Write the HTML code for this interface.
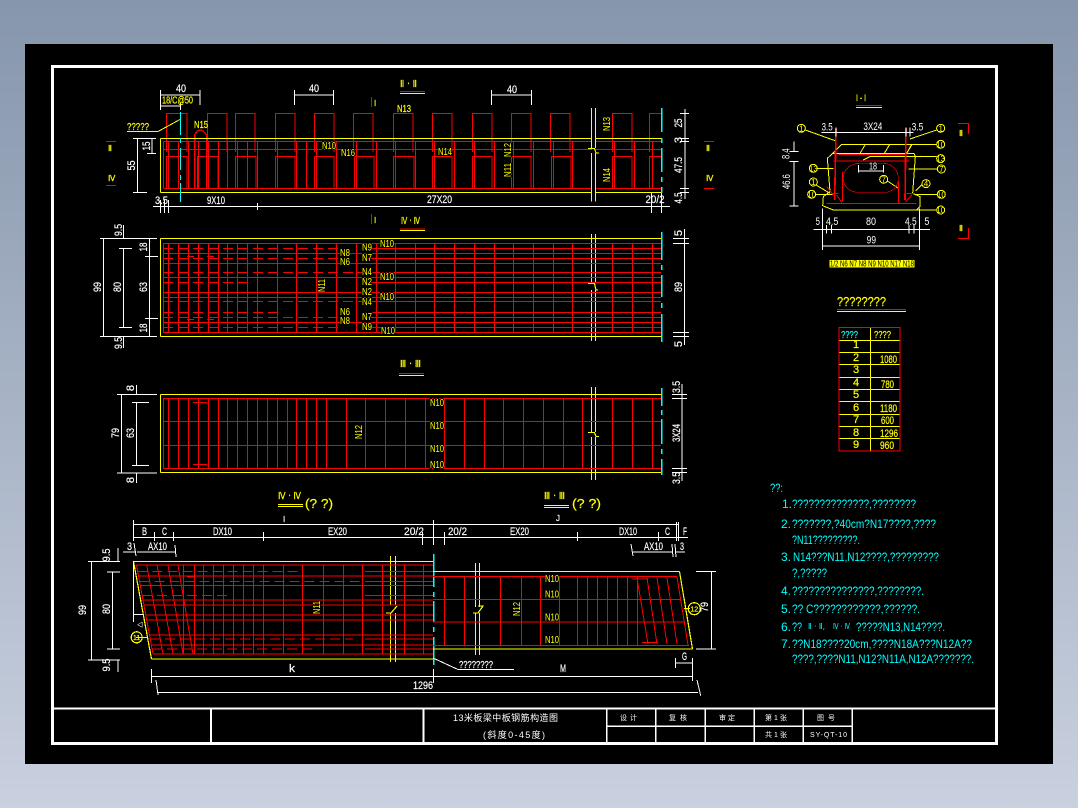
<!DOCTYPE html>
<html><head><meta charset="utf-8"><title>CAD</title>
<style>
html,body{margin:0;padding:0;width:1078px;height:808px;overflow:hidden;background:linear-gradient(180deg,#8696ac 0%,#c9d0df 100%)}
svg{position:absolute;left:0;top:0;display:block}
path,circle,rect{shape-rendering:crispEdges}
text{font-family:"Liberation Sans","Noto Sans CJK SC",sans-serif;font-size:11px}
.w{fill:#fff;stroke:#fff;stroke-width:.2px}.y{fill:#ff0;stroke:#ff0;stroke-width:.2px}.c{fill:#0ff;stroke:#0ff;stroke-width:.2px}
.n{fill:#ff0;font-size:10px;stroke:#000;stroke-width:2px;paint-order:stroke}
.cn{font-size:9px;fill:#fff}
.note{fill:#0ff;font-size:12px}
.ln{fill:none}
.s{fill:none}
</style></head><body>
<svg width="1078" height="808" viewBox="0 0 1078 808" xmlns="http://www.w3.org/2000/svg">
<rect x="25" y="44" width="1028" height="720" fill="#000"/>
<!-- frame -->
<g class="ln" stroke="#fff">
<rect x="52.5" y="66.5" width="944" height="677" stroke-width="3"/>
<path stroke-width="2" d="M53 708.5H996M211 708V743M423.5 708V743"/>
<path stroke-width="1.5" d="M606.5 708V743M655.5 708V743M705 708V743M754 708V743M803 708V743M852 708V743M606 726H852"/>
</g>

<!-- VIEW 1 -->
<g class="ln" stroke="#f00">
<path d="M163.5 141.5H661M163.5 149.5H661M163.5 188.5H661M163.5 141.5V188.5"/>
<path d="M166.5 152V113.5H187V152M207.5 152V113.5H227V152M235.5 152V113.5H255V152M275.5 152V113.5H295V152M314.5 152V113.5H334V152M353.5 152V113.5H373V152M393.5 152V113.5H413V152M432.5 152V113.5H452V152M472.5 152V113.5H492V152M511.5 152V113.5H531V152M550.5 152V113.5H570V152M612.5 152V113.5H632V152M649.5 152V113.5H661"/>
<path d="M166.5 188V156.5H187V188M197.5 188V156.5H218V188M235.5 188V156.5H256V188M275.5 188V156.5H295V188M314.5 188V156.5H334V188M354.5 188V156.5H374V188M393.5 188V156.5H414V188M432.5 188V156.5H452V188M472.5 188V156.5H492V188M511.5 188V156.5H531V188M551.5 188V156.5H571V188M612.5 188V156.5H632V188M649.5 188V156.5H661"/>
<path d="M168.5 141V188M178.5 141V188M188.5 141V188M198.5 141V188M208.5 141V188M218.5 141V188M227.5 141V188M237.5 141V188M247.5 141V188M257.5 141V188M277.5 141V188M296.5 141V188M306.5 141V188M316.5 141V188M336.5 141V188M356.5 141V188M376.5 141V188M395.5 141V188M415.5 141V188M434.5 141V188M454.5 141V188M474.5 141V188M494.5 141V188M513.5 141V188M533.5 141V188M553.5 141V188M572.5 141V188M614.5 141V188M634.5 141V188M652.5 141V188"/>
<path stroke-width="1.5" d="M194.5 188V135M206.5 188V135"/>
<path d="M371.5 97V107M371.5 214V224M106 141.5H116M106 185.5H116M704 141.5H714M704 188.5H714"/>
</g>
<path class="s" stroke="#f00" stroke-width="1.3" d="M194.5 135Q200 125 206.5 135"/>
<g class="ln" stroke="#ff0">
<path d="M160.5 138.5H661M160.5 192.5H661M160.5 138.5V192.5"/>
<path d="M127 131.5H158"/>
<path d="M400 93.5H425M400 230.5H425M399 375.5H424"/>
</g>
<path class="s" stroke="#ff0" d="M158 131.5L180 119.5"/>
<path class="ln" stroke="#f00" d="M400 91.5H425M400 229H425M399 373.5H424"/>
<g class="ln" stroke="#0ff" stroke-width="1">
<path d="M180.5 112V135M180.5 138V143M180.5 148V170M180.5 175V180M180.5 183V202"/>
<path stroke-width="1.5" d="M661.5 108V132M661.5 138V143M661.5 148V172M661.5 177V182M661.5 187V193"/>
<path stroke-width="1.5" d="M661.5 232V260M661.5 265V270M661.5 275V297M661.5 303V308M661.5 314V342"/>
<path stroke-width="1.5" d="M661.5 388V406M661.5 410V415M661.5 419V444M661.5 449V454M661.5 459V475"/>
<path stroke-width="1.5" d="M433.5 554V587M433.5 592V597M433.5 601V622M433.5 627V632M433.5 637V665"/>
</g>
<!-- breaks -->
<rect x="592" y="108" width="3" height="94" fill="#000"/>
<rect x="592" y="234" width="3" height="107" fill="#000"/>
<rect x="592" y="387" width="3" height="93" fill="#000"/>
<rect x="391" y="556" width="4" height="106" fill="#000"/>
<rect x="476" y="563" width="3" height="92" fill="#000"/>
<g class="ln" stroke="#ff0" stroke-width="1.2">
<path d="M591.5 108V148M595.5 108V148M591.5 153V201.5M595.5 153V201.5"/>
<path d="M591.5 234V283M595.5 234V283M591.5 290V341M595.5 290V341"/>
<path d="M591.5 387V432M595.5 387V432M591.5 437V480M595.5 437V480"/>
<path d="M390.5 556V605M395.5 556V605M390.5 613V662M395.5 613V662"/>
<path d="M475.5 563V607M479.5 563V607M475.5 613V655M479.5 613V655"/>
</g>
<g class="s" stroke="#ff0" stroke-width="1.2">
<path d="M588 148.5H594.5L596 153H599"/>
<path d="M588 283.5H594.5L596 290H598"/>
<path d="M588 432.5H594.5L596 436.5H599"/>
<path d="M386 613H391L397 606"/>
<path d="M473 613H478L483 606H478"/>
</g>
<g class="ln" stroke="#fff">
<path d="M160.5 90V105M200 90V105M160.5 95H200M294.5 90V105M333.5 90V105M294.5 95H333.5M491.5 90V105M531.5 90V105M491.5 95H531.5"/>
<path d="M160.5 100V110M180.5 103V110M160.5 106H181"/>
<path d="M133 138.5H147M133 192.5H147M137.5 138.5V192.5M147 138.5H156M147 153.5H156M152 138V154"/>
<path d="M153 206.5H670M160.5 200V213M164.5 200V213M168.5 200V213M257.5 203V210M651.5 193V213M661.5 193V213"/>
<path d="M680 113.5H689M680 138.5H689M680 141.5H689M680 188.5H689M680 192.5H689M685 109V199"/>
</g>
<text class="w" x="181" y="92" text-anchor="middle" textLength="10" lengthAdjust="spacingAndGlyphs">40</text>
<text class="w" x="314" y="92" text-anchor="middle" textLength="10" lengthAdjust="spacingAndGlyphs">40</text>
<text class="w" x="512" y="93" text-anchor="middle" textLength="10" lengthAdjust="spacingAndGlyphs">40</text>
<text class="y" x="162" y="103.5" textLength="31" lengthAdjust="spacingAndGlyphs" style="font-size:10px">18/C@50</text>
<text class="y" x="127" y="130" textLength="22" lengthAdjust="spacingAndGlyphs" style="font-size:10px">?????</text>
<text class="y" x="194" y="128" textLength="14" lengthAdjust="spacingAndGlyphs" style="font-size:10px">N15</text>
<text class="y" x="397" y="112" textLength="14" lengthAdjust="spacingAndGlyphs" style="font-size:10px">N13</text>
<text class="y" x="374" y="106" style="font-size:8px">I</text>
<text class="y" x="374" y="223" style="font-size:8px">I</text>
<text class="y" x="400" y="87" textLength="17" lengthAdjust="spacingAndGlyphs" style="font-size:10px;font-family:'DejaVu Sans',sans-serif">Ⅱ · Ⅱ</text>
<text class="y" x="108" y="151" style="font-size:8px;font-family:'DejaVu Sans',sans-serif">Ⅱ</text>
<text class="y" x="108" y="181" style="font-size:8px;font-family:'DejaVu Sans',sans-serif">Ⅳ</text>
<text class="y" x="706" y="151" style="font-size:8px;font-family:'DejaVu Sans',sans-serif">Ⅱ</text>
<text class="y" x="706" y="181" style="font-size:8px;font-family:'DejaVu Sans',sans-serif">Ⅳ</text>
<text class="n" x="322" y="149" textLength="14" lengthAdjust="spacingAndGlyphs">N10</text>
<text class="n" x="341" y="156" textLength="14" lengthAdjust="spacingAndGlyphs">N16</text>
<text class="n" x="438" y="155" textLength="14" lengthAdjust="spacingAndGlyphs">N14</text>
<text class="n" transform="translate(511 177) rotate(-90)" textLength="14" lengthAdjust="spacingAndGlyphs">N11</text>
<text class="n" transform="translate(511 157) rotate(-90)" textLength="14" lengthAdjust="spacingAndGlyphs">N12</text>
<text class="n" transform="translate(610 131) rotate(-90)" textLength="14" lengthAdjust="spacingAndGlyphs">N13</text>
<text class="n" transform="translate(610 182) rotate(-90)" textLength="14" lengthAdjust="spacingAndGlyphs">N14</text>
<text class="w" transform="translate(135 165.5) rotate(-90)" text-anchor="middle" textLength="10" lengthAdjust="spacingAndGlyphs">55</text>
<text class="w" transform="translate(150 146) rotate(-90)" text-anchor="middle" textLength="9" lengthAdjust="spacingAndGlyphs">15</text>
<text class="w" x="155" y="204" textLength="13" lengthAdjust="spacingAndGlyphs">3.5</text>
<text class="w" x="207" y="204" textLength="18" lengthAdjust="spacingAndGlyphs">9X10</text>
<text class="w" x="427" y="203" textLength="25" lengthAdjust="spacingAndGlyphs">27X20</text>
<text class="w" x="645.5" y="203" textLength="19" lengthAdjust="spacingAndGlyphs">20/2</text>
<text class="w" transform="translate(682 123) rotate(-90)" text-anchor="middle" textLength="9" lengthAdjust="spacingAndGlyphs">25</text>
<text class="w" transform="translate(682 140) rotate(-90)" text-anchor="middle">3</text>
<text class="w" transform="translate(682 165) rotate(-90)" text-anchor="middle" textLength="16" lengthAdjust="spacingAndGlyphs">47.5</text>
<text class="w" transform="translate(682 198) rotate(-90)" text-anchor="middle" textLength="11" lengthAdjust="spacingAndGlyphs">4.5</text>

<!-- VIEW 2 -->
<g class="ln" stroke="#f00">
<path d="M163 243.5H661M163 253.5H661M163 263.5H661M163 277.5H661M163 292.5H661M163 297.5H661M163 322.5H661M163 332.5H661"/>
<path d="M365 248.5H661M365 258.5H661M356 272.5H661M365 282.5H661M360 301.5H661M365 312.5H661M365 317.5H661M365 327.5H661"/>
<path stroke-dasharray="10 5" d="M163 248.5H340M163 258.5H340M163 272.5H356M163 282.5H248M163 301.5H360M163 312.5H280M163 317.5H340M163 327.5H340"/>
<path d="M163.5 243V333M168.5 243V333M178.5 243V333M188.5 243V333M198.5 243V333M208.5 243V333M218.5 243V333M227.5 243V333M237.5 243V333M247.5 243V333M257.5 243V333M277.5 243V333M296.5 243V333M316.5 243V333M336.5 243V333M356.5 243V333M376.5 243V333M395.5 243V333M415.5 243V333M434.5 243V333M454.5 243V333M474.5 243V333M494.5 243V333M513.5 243V333M533.5 243V333M553.5 243V333M572.5 243V333M612.5 243V333M632.5 243V333M652.5 243V333"/>
<path d="M187 256.5H194M207 256.5H214M187 319.5H194M207 319.5H214"/>
</g>
<path class="ln" stroke="#ff0" d="M160.5 238.5H661M160.5 336.5H661M160.5 238.5V336.5"/>
<g class="ln" stroke="#fff">
<path d="M100 238.5H157M100 336.5H157M103.5 238V337M119 248.5H132M119 327.5H132M123.5 248V328M145 256.5H158M145 318.5H158M149.5 238V337M123.5 225V238M123.5 337V348"/>
<path d="M673 238.5H689M673 243.5H689M673 332.5H689M673 336.5H689M684.5 229V345"/>
</g>
<g>
<text class="n" x="340" y="256" textLength="10" lengthAdjust="spacingAndGlyphs">N8</text>
<text class="n" x="340" y="265" textLength="10" lengthAdjust="spacingAndGlyphs">N6</text>
<text class="n" x="362" y="250.5" textLength="10" lengthAdjust="spacingAndGlyphs">N9</text>
<text class="n" x="362" y="261" textLength="10" lengthAdjust="spacingAndGlyphs">N7</text>
<text class="n" x="362" y="275" textLength="10" lengthAdjust="spacingAndGlyphs">N4</text>
<text class="n" x="362" y="285" textLength="10" lengthAdjust="spacingAndGlyphs">N2</text>
<text class="n" x="362" y="295" textLength="10" lengthAdjust="spacingAndGlyphs">N2</text>
<text class="n" x="362" y="305" textLength="10" lengthAdjust="spacingAndGlyphs">N4</text>
<text class="n" x="340" y="315" textLength="10" lengthAdjust="spacingAndGlyphs">N6</text>
<text class="n" x="362" y="320" textLength="10" lengthAdjust="spacingAndGlyphs">N7</text>
<text class="n" x="340" y="324" textLength="10" lengthAdjust="spacingAndGlyphs">N8</text>
<text class="n" x="362" y="330" textLength="10" lengthAdjust="spacingAndGlyphs">N9</text>
<text class="n" x="380" y="247" textLength="14" lengthAdjust="spacingAndGlyphs">N10</text>
<text class="n" x="380" y="280" textLength="14" lengthAdjust="spacingAndGlyphs">N10</text>
<text class="n" x="380" y="300" textLength="14" lengthAdjust="spacingAndGlyphs">N10</text>
<text class="n" x="381" y="334" textLength="14" lengthAdjust="spacingAndGlyphs">N10</text>
<text class="n" transform="translate(325 292) rotate(-90)" textLength="13" lengthAdjust="spacingAndGlyphs">N11</text>
</g>
<text class="y" x="401" y="224" textLength="19" lengthAdjust="spacingAndGlyphs" style="font-size:10px;font-family:'DejaVu Sans',sans-serif">Ⅳ · Ⅳ</text>
<text class="w" transform="translate(101 287) rotate(-90)" text-anchor="middle" textLength="10" lengthAdjust="spacingAndGlyphs">99</text>
<text class="w" transform="translate(121 287) rotate(-90)" text-anchor="middle" textLength="10" lengthAdjust="spacingAndGlyphs">80</text>
<text class="w" transform="translate(147 287) rotate(-90)" text-anchor="middle" textLength="10" lengthAdjust="spacingAndGlyphs">63</text>
<text class="w" transform="translate(147 247) rotate(-90)" text-anchor="middle" textLength="9" lengthAdjust="spacingAndGlyphs">18</text>
<text class="w" transform="translate(147 328) rotate(-90)" text-anchor="middle" textLength="9" lengthAdjust="spacingAndGlyphs">18</text>
<text class="w" transform="translate(122 230) rotate(-90)" text-anchor="middle" textLength="12" lengthAdjust="spacingAndGlyphs">9.5</text>
<text class="w" transform="translate(122 343) rotate(-90)" text-anchor="middle" textLength="12" lengthAdjust="spacingAndGlyphs">9.5</text>
<text class="w" transform="translate(682 233) rotate(-90)" text-anchor="middle">5</text>
<text class="w" transform="translate(682 287) rotate(-90)" text-anchor="middle" textLength="10" lengthAdjust="spacingAndGlyphs">89</text>
<text class="w" transform="translate(682 344) rotate(-90)" text-anchor="middle">5</text>

<!-- VIEW 3 -->
<g class="ln" stroke="#f00">
<path d="M163 398.5H661M163 421.5H661M163 445.5H661M163 468.5H661"/>
<path d="M163.5 398V469M168.5 398V469M178.5 398V469M188.5 398V469M198.5 398V469M208.5 398V469M218.5 398V469M227.5 398V469M237.5 398V469M247.5 398V469M257.5 398V469M267.5 398V469M277.5 398V469M287.5 398V469M296.5 398V469M306.5 398V469M316.5 398V469M326.5 398V469M346.5 398V469M365.5 398V469M385.5 398V469M405.5 398V469M425.5 398V469M444.5 398V469M464.5 398V469M484.5 398V469M503.5 398V469M523.5 398V469M543.5 398V469M563.5 398V469M582.5 398V469M612.5 398V469M632.5 398V469M652.5 398V469"/>
<path d="M193 402.5H207M193 464.5H207"/>
</g>
<path class="ln" stroke="#ff0" d="M160.5 394.5H661M160.5 472.5H661M160.5 394.5V472.5"/>
<g class="ln" stroke="#fff">
<path d="M117 394.5H157M117 473H157M121.5 394V473M132 402.5H149M132 465.5H149M136.5 402V466M136.5 385V394M136.5 473V483"/>
<path d="M672 394.5H687M672 398.5H687M672 468.5H687M672 472.5H687M682 384V481"/>
</g>
<text class="y" x="400" y="367" textLength="21" lengthAdjust="spacingAndGlyphs" style="font-size:10px;font-family:'DejaVu Sans',sans-serif">Ⅲ · Ⅲ</text>
<text class="n" transform="translate(362 439) rotate(-90)" textLength="14" lengthAdjust="spacingAndGlyphs">N12</text>
<text class="n" x="430" y="406" textLength="14" lengthAdjust="spacingAndGlyphs">N10</text>
<text class="n" x="430" y="429" textLength="14" lengthAdjust="spacingAndGlyphs">N10</text>
<text class="n" x="430" y="452" textLength="14" lengthAdjust="spacingAndGlyphs">N10</text>
<text class="n" x="430" y="468" textLength="14" lengthAdjust="spacingAndGlyphs">N10</text>
<text class="w" transform="translate(119 433) rotate(-90)" text-anchor="middle" textLength="10" lengthAdjust="spacingAndGlyphs">79</text>
<text class="w" transform="translate(134 433) rotate(-90)" text-anchor="middle" textLength="10" lengthAdjust="spacingAndGlyphs">63</text>
<text class="w" transform="translate(134 388) rotate(-90)" text-anchor="middle">8</text>
<text class="w" transform="translate(134 480) rotate(-90)" text-anchor="middle">8</text>
<text class="w" transform="translate(680 387) rotate(-90)" text-anchor="middle" textLength="12" lengthAdjust="spacingAndGlyphs">3.5</text>
<text class="w" transform="translate(680 433) rotate(-90)" text-anchor="middle" textLength="18" lengthAdjust="spacingAndGlyphs">3X24</text>
<text class="w" transform="translate(680 478) rotate(-90)" text-anchor="middle" textLength="12" lengthAdjust="spacingAndGlyphs">3.5</text>

<!-- VIEW 4 left -->
<g class="ln" stroke="#f00">
<path d="M136.5 565H433M138.5 576H433M140.3 585.5H433M143 600H433M143.9 605H433M145.8 615H433M146.7 620H433M149.5 635H433M151.3 645H433M153 654H433"/>
<path d="M365 571.5H433M365 581.5H433M365 595.5H433M365 639H433M365 649H433"/>
<path stroke-dasharray="10 5" d="M137.7 571.5H300M139.5 581.5H360M142.1 595.5H230M150.2 639H353M152 649H313"/>
<path d="M203.5 565V654M213.5 565V654M223.5 565V654M233.5 565V654M243.5 565V654M253.5 565V654M263.5 565V654M283.5 565V654M302.5 565V654M323.5 565V654M343.5 565V654M362.5 565V654M382.5 565V654M404.5 565V654M423.5 565V654M183.5 565V654M194.5 565V654"/>
<path d="M187 577H194"/>
</g>
<g class="s" stroke="#f00">
<path d="M136.5 565L153 654M146.7 565L163 654M157 565L173 654M168 565L183 654M178 565L193 654"/>
</g>
<!-- VIEW 4 right -->
<g class="ln" stroke="#f00">
<path d="M433 576.5H677M433 599.5H681M433 622H685M433 645.5H689"/>
<path d="M444.5 576V646M464.5 576V646M500.5 576V646M521.5 576V646M540.5 576V646M559.5 576V646M577.5 576V646M587.5 576V646M597.5 576V646M607.5 576V646M617.5 576V646M627.5 576V646M637.5 576V646"/>
<path d="M632 579H648M642 642.5H658"/>
</g>
<g class="s" stroke="#f00">
<path d="M637 578L648 644M647 578L657 644M657 578L667 644M667 578L677 644M677 577L688 645"/>
</g>
<g class="ln" stroke="#ff0" stroke-width="1.2">
<path d="M133.5 561.5H433M151.5 659H433M433 571.5H679.5M433 649H692.5"/>
<path d="M136 637.5H148M684 608.5H690"/>
<path d="M278 504.5H303M278 506.5H303M544 505.5H569M544 507.5H569"/>
</g>
<g class="s" stroke="#ff0" stroke-width="1.2">
<path d="M133.5 561.5L151.5 659M679.5 571.5L692.5 649"/>
<circle cx="136.7" cy="637.3" r="5.5"/>
<circle cx="694.3" cy="608.7" r="6"/>
</g>
<text class="y" x="136.7" y="640" text-anchor="middle" style="font-size:7px">11</text>
<text class="y" x="694.3" y="611.5" text-anchor="middle" style="font-size:7px">12</text>
<text class="y" x="278" y="499" textLength="23" lengthAdjust="spacingAndGlyphs" style="font-size:10px;font-family:'DejaVu Sans',sans-serif">Ⅳ · Ⅳ</text>
<text class="y" x="305" y="508" textLength="28" lengthAdjust="spacingAndGlyphs" style="font-size:13px">(? ?)</text>
<text class="y" x="544" y="499" textLength="21" lengthAdjust="spacingAndGlyphs" style="font-size:10px;font-family:'DejaVu Sans',sans-serif">Ⅲ · Ⅲ</text>
<text class="y" x="572" y="508" textLength="29" lengthAdjust="spacingAndGlyphs" style="font-size:13px">(? ?)</text>
<text class="n" transform="translate(320 614) rotate(-90)" textLength="13" lengthAdjust="spacingAndGlyphs">N11</text>
<text class="n" transform="translate(520 616) rotate(-90)" textLength="14" lengthAdjust="spacingAndGlyphs">N12</text>
<text class="n" x="545" y="582" textLength="14" lengthAdjust="spacingAndGlyphs">N10</text>
<text class="n" x="545" y="597.7" textLength="14" lengthAdjust="spacingAndGlyphs">N10</text>
<text class="n" x="545" y="620.7" textLength="14" lengthAdjust="spacingAndGlyphs">N10</text>
<text class="n" x="545" y="643" textLength="14" lengthAdjust="spacingAndGlyphs">N10</text>
<g class="ln" stroke="#fff">
<path d="M133 524.5H678M133 537.5H688M133.5 520V541M154.5 532V541M173.5 532V541M263.5 532V541M422.5 532V545M433.5 520V545M444.5 532V545M577.5 532V541M658.5 532V541M676.5 522V541M678.5 522V541"/>
<path d="M123 552H135M137 552H176M632 552H673M675 552H685"/>
<path d="M133.5 561V622M133.5 614.5H143"/>
<path d="M88 561.5H120M88 660H120M91.5 561V660M107 572H120M107 649H120M112.5 572V649M118 548V561M118 660V672"/>
<path d="M696 571.5H716M696 649H716M711.5 571V649"/>
<path d="M151.5 669V683M151.5 676.5H692.5M433.5 669V683M692.5 658V681M158 692.5H698M675.5 663H692.5M675.5 658V668"/>
<path d="M458 669.5H514"/>
</g>
<g class="s" stroke="#fff">
<path d="M134 543L136 556M175 545L176 557M631 544L633 556M672 544L673 557M675 544L676 557"/>
<path d="M156 680L158 695M697 680L700.7 695.7M433 658L458 669.5"/>
</g>
<g class="w">
<text class="w" x="283" y="522" style="font-size:8px">I</text>
<text class="w" x="556" y="521" style="font-size:8px">J</text>
<text class="w" x="142" y="535" textLength="5" lengthAdjust="spacingAndGlyphs">B</text>
<text class="w" x="162" y="535" textLength="5" lengthAdjust="spacingAndGlyphs">C</text>
<text class="w" x="213" y="535" textLength="19" lengthAdjust="spacingAndGlyphs">DX10</text>
<text class="w" x="328" y="535" textLength="19" lengthAdjust="spacingAndGlyphs">EX20</text>
<text class="w" x="404" y="535" textLength="20" lengthAdjust="spacingAndGlyphs">20/2</text>
<text class="w" x="448" y="535" textLength="19" lengthAdjust="spacingAndGlyphs">20/2</text>
<text class="w" x="510" y="535" textLength="19" lengthAdjust="spacingAndGlyphs">EX20</text>
<text class="w" x="619" y="535" textLength="18" lengthAdjust="spacingAndGlyphs">DX10</text>
<text class="w" x="665" y="535" textLength="5" lengthAdjust="spacingAndGlyphs">C</text>
<text class="w" x="683" y="535" textLength="4" lengthAdjust="spacingAndGlyphs">F</text>
<text class="w" x="148" y="550" textLength="19" lengthAdjust="spacingAndGlyphs">AX10</text>
<text class="w" x="644" y="550" textLength="19" lengthAdjust="spacingAndGlyphs">AX10</text>
<text class="w" x="127" y="550" textLength="5" lengthAdjust="spacingAndGlyphs">3</text>
<text class="w" x="680" y="550" textLength="4" lengthAdjust="spacingAndGlyphs">3</text>
<text class="w" x="289" y="672" textLength="6" lengthAdjust="spacingAndGlyphs">k</text>
<text class="w" x="560" y="672" textLength="6" lengthAdjust="spacingAndGlyphs">M</text>
<text class="w" x="682" y="660" textLength="5" lengthAdjust="spacingAndGlyphs">G</text>
<text class="w" x="413" y="689" textLength="20" lengthAdjust="spacingAndGlyphs">1296</text>
<text class="w" x="459" y="668" textLength="34" lengthAdjust="spacingAndGlyphs" style="font-size:10px">????????</text>
<text class="w" x="137" y="627" style="font-size:6px">◁</text>
</g>
<text class="w" transform="translate(86 610) rotate(-90)" text-anchor="middle" textLength="10" lengthAdjust="spacingAndGlyphs">99</text>
<text class="w" transform="translate(110 609) rotate(-90)" text-anchor="middle" textLength="10" lengthAdjust="spacingAndGlyphs">80</text>
<text class="w" transform="translate(110 555) rotate(-90)" text-anchor="middle" textLength="13" lengthAdjust="spacingAndGlyphs">9.5</text>
<text class="w" transform="translate(110 665) rotate(-90)" text-anchor="middle" textLength="13" lengthAdjust="spacingAndGlyphs">9.5</text>
<text class="w" transform="translate(708 607) rotate(-90)" text-anchor="middle" textLength="10" lengthAdjust="spacingAndGlyphs">79</text>

<!-- SECTION I-I -->
<text class="y" x="856" y="101" textLength="10" lengthAdjust="spacingAndGlyphs" style="font-size:9px">I - I</text>
<path class="ln" stroke="#f00" d="M856 105.5H882M958 123.5H968.5V134M958 238.5H968.5V228"/>
<path class="ln" stroke="#ff0" d="M856 107.5H882"/>
<text class="y" x="959" y="136" style="font-size:8px;font-family:'DejaVu Sans',sans-serif">Ⅱ</text>
<text class="y" x="959" y="231" style="font-size:8px;font-family:'DejaVu Sans',sans-serif">Ⅱ</text>
<g transform="translate(770 85) scale(.33333)">
<g fill="none" stroke="#ff0" stroke-width="3">
<path d="M215 178H500M285 180L270 205M358 180L343 205M425 180L410 205M215 178L188 205L172 220L180 320L160 335L158 362L190 375H500M188 205H432M425 178L410 205M432 205L436 215L428 325L450 335V365L440 375M280 225L300 215H500"/>
<path d="M106 135L198 168M500 135L420 162M415 252H502M143 250H190M138 300L180 325M137 328H155M155 328H190M457 298L437 318M502 328H437M352 288L385 310"/>
<circle cx="94" cy="130" r="12"/><circle cx="512" cy="130" r="12"/><circle cx="512" cy="178" r="12"/><circle cx="512" cy="221" r="12"/><circle cx="514" cy="252" r="12"/><circle cx="130" cy="250" r="12"/><circle cx="130" cy="291" r="12"/><circle cx="125" cy="328" r="12"/><circle cx="468" cy="296" r="12"/><circle cx="514" cy="328" r="12"/><circle cx="512" cy="375" r="12"/><circle cx="341" cy="283" r="12"/>
</g>
<g fill="none" stroke="#f00" stroke-width="3">
<path stroke-width="5" d="M198 130L194 345M408 130L405 345"/>
<path d="M170 355H440M190 228H418M205 208H410M218 260V350M385 290V355M170 305L190 330M200 330L215 352M425 330L405 352M185 325H205M410 325H430"/>
<path stroke-width="2" d="M220 280C220 250 245 235 270 235H340C365 235 385 255 385 280C385 305 365 322 345 322H265C240 322 220 305 220 280Z"/>
</g>
<path fill="none" stroke="#fff" stroke-width="3" d="M155 143H430M198 128V155M408 128V155M420 128V155M266 240V262M340 240V262M266 258H340M72 170V200M58 200H85M58 230H85M72 230V363M58 363H85M130 433H480M157 420V445M170 420V445M185 420V445M417 420V445M432 420V445M448 420V445M157 370V495M448 370V495M157 483H448"/>
<g fill="#ff0" style="font-size:24px">
<text x="94" y="139" text-anchor="middle" style="font-size:24px" fill="#ff0">1</text><text x="512" y="139" text-anchor="middle" style="font-size:24px" fill="#ff0">1</text><text x="512" y="187" text-anchor="middle" style="font-size:24px" fill="#ff0">10</text><text x="512" y="230" text-anchor="middle" style="font-size:24px" fill="#ff0">13</text><text x="514" y="261" text-anchor="middle" style="font-size:24px" fill="#ff0">7</text><text x="130" y="259" text-anchor="middle" style="font-size:24px" fill="#ff0">13</text><text x="130" y="300" text-anchor="middle" style="font-size:24px" fill="#ff0">1</text><text x="125" y="337" text-anchor="middle" style="font-size:24px" fill="#ff0">10</text><text x="468" y="305" text-anchor="middle" style="font-size:24px" fill="#ff0">4</text><text x="514" y="337" text-anchor="middle" style="font-size:24px" fill="#ff0">10</text><text x="512" y="384" text-anchor="middle" style="font-size:24px" fill="#ff0">10</text><text x="341" y="292" text-anchor="middle" style="font-size:24px" fill="#ff0">7</text>
</g>
<g fill="#fff">
<text x="155" y="136" textLength="33" lengthAdjust="spacingAndGlyphs" fill="#fff" style="font-size:33px">3.5</text>
<text x="280" y="135" textLength="57" lengthAdjust="spacingAndGlyphs" fill="#fff" style="font-size:33px">3X24</text>
<text x="425" y="136" textLength="35" lengthAdjust="spacingAndGlyphs" fill="#fff" style="font-size:33px">3.5</text>
<text x="297" y="254" textLength="24" lengthAdjust="spacingAndGlyphs" fill="#fff" style="font-size:30px">18</text>
<text x="137" y="420" textLength="13" lengthAdjust="spacingAndGlyphs" fill="#fff" style="font-size:33px">5</text>
<text x="168" y="420" textLength="37" lengthAdjust="spacingAndGlyphs" fill="#fff" style="font-size:33px">4.5</text>
<text x="288" y="420" textLength="30" lengthAdjust="spacingAndGlyphs" fill="#fff" style="font-size:33px">80</text>
<text x="405" y="420" textLength="35" lengthAdjust="spacingAndGlyphs" fill="#fff" style="font-size:33px">4.5</text>
<text x="463" y="420" textLength="15" lengthAdjust="spacingAndGlyphs" fill="#fff" style="font-size:33px">5</text>
<text x="290" y="475" textLength="28" lengthAdjust="spacingAndGlyphs" fill="#fff" style="font-size:33px">99</text>
<text transform="translate(58 206) rotate(-90)" text-anchor="middle" textLength="32" lengthAdjust="spacingAndGlyphs" fill="#fff" style="font-size:33px">8.4</text>
<text transform="translate(60 290) rotate(-90)" text-anchor="middle" textLength="45" lengthAdjust="spacingAndGlyphs" fill="#fff" style="font-size:33px">46.6</text>
</g>
<rect x="178" y="525" width="255" height="23" fill="#ff0"/>
<text x="180" y="545" textLength="252" lengthAdjust="spacingAndGlyphs" fill="#000" style="font-size:24px">1/2 N6 N7 N8 N9 N10 N17 N18</text>
</g>

<!-- TABLE -->
<text class="y" x="837" y="306" textLength="49" lengthAdjust="spacingAndGlyphs" style="font-size:13px">????????</text>
<path class="ln" stroke="#f00" d="M837 309.5H906"/>
<path class="ln" stroke="#ff0" d="M837 311.5H906"/>
<path class="ln" stroke="#ff0" d="M870.5 328V451M839 340.5H900M839 352.5H900M839 364.5H900M839 377.5H900M839 389.5H900M839 401.5H900M839 414.5H900M839 426.5H900M839 438.5H900"/>
<rect class="ln" x="839" y="327.5" width="61" height="123.5" stroke="#f00"/>
<text class="c" x="841" y="338" textLength="17" lengthAdjust="spacingAndGlyphs" style="font-size:10px">????</text>
<text class="y" x="874" y="338" textLength="17" lengthAdjust="spacingAndGlyphs" style="font-size:10px">????</text>
<text class="y" x="856" y="348" text-anchor="middle">1</text>
<text class="y" x="856" y="361" text-anchor="middle">2</text>
<text class="y" x="856" y="373" text-anchor="middle">3</text>
<text class="y" x="856" y="386" text-anchor="middle">4</text>
<text class="y" x="856" y="398" text-anchor="middle">5</text>
<text class="y" x="856" y="411" text-anchor="middle">6</text>
<text class="y" x="856" y="423" text-anchor="middle">7</text>
<text class="y" x="856" y="436" text-anchor="middle">8</text>
<text class="y" x="856" y="448" text-anchor="middle">9</text>
<text class="y" x="880" y="363" textLength="17" lengthAdjust="spacingAndGlyphs">1080</text>
<text class="y" x="881" y="388" textLength="13" lengthAdjust="spacingAndGlyphs">780</text>
<text class="y" x="880" y="412" textLength="17" lengthAdjust="spacingAndGlyphs">1180</text>
<text class="y" x="881" y="424" textLength="13" lengthAdjust="spacingAndGlyphs">600</text>
<text class="y" x="880" y="437" textLength="18" lengthAdjust="spacingAndGlyphs">1296</text>
<text class="y" x="880" y="449" textLength="14" lengthAdjust="spacingAndGlyphs">960</text>

<!-- NOTES -->
<text class="note" x="770" y="492" textLength="13" lengthAdjust="spacingAndGlyphs">??:</text>
<text class="note" x="782" y="508">1.</text>
<text class="note" x="792" y="508" textLength="124" lengthAdjust="spacingAndGlyphs">??????????????,????????</text>
<text class="note" x="781" y="528">2.</text>
<text class="note" x="792" y="528" textLength="144" lengthAdjust="spacingAndGlyphs">???????,?40cm?N17????,????</text>
<text class="note" x="792" y="544" textLength="68" lengthAdjust="spacingAndGlyphs">?N11?????????.</text>
<text class="note" x="781" y="561">3.</text>
<text class="note" x="793" y="561" textLength="146" lengthAdjust="spacingAndGlyphs">N14???N11,N12????,?????????</text>
<text class="note" x="792" y="577" textLength="35" lengthAdjust="spacingAndGlyphs">?,?????</text>
<text class="note" x="781" y="595">4.</text>
<text class="note" x="792" y="595" textLength="132" lengthAdjust="spacingAndGlyphs">???????????????,????????.</text>
<text class="note" x="781" y="613">5.</text>
<text class="note" x="792" y="613" textLength="128" lengthAdjust="spacingAndGlyphs">?? C????????????,??????.</text>
<text class="note" x="781" y="631">6.</text>
<text class="note" x="792" y="631" textLength="10" lengthAdjust="spacingAndGlyphs">??</text>
<text class="note" x="808" y="629" textLength="17" lengthAdjust="spacingAndGlyphs" style="font-size:8px;font-family:'DejaVu Sans',sans-serif">Ⅱ · Ⅱ,</text>
<text class="note" x="833" y="629" textLength="17" lengthAdjust="spacingAndGlyphs" style="font-size:8px;font-family:'DejaVu Sans',sans-serif">Ⅳ · Ⅳ</text>
<text class="note" x="856" y="631" textLength="89" lengthAdjust="spacingAndGlyphs">?????N13,N14????.</text>
<text class="note" x="781" y="648">7.</text>
<text class="note" x="792" y="648" textLength="180" lengthAdjust="spacingAndGlyphs">??N18????20cm,????N18A???N12A??</text>
<text class="note" x="792" y="663" textLength="182" lengthAdjust="spacingAndGlyphs">????,????N11,N12?N11A,N12A???????.</text>

<!-- TITLE BLOCK -->
<text class="cn" x="453" y="721" textLength="105" lengthAdjust="spacing">13米板梁中板钢筋构造图</text>
<text class="cn" x="483" y="738" textLength="62" lengthAdjust="spacing">(斜度0-45度)</text>
<text class="cn" x="620" y="720" textLength="17" lengthAdjust="spacing" style="font-size:7px">设计</text>
<text class="cn" x="669" y="720" textLength="18" lengthAdjust="spacing" style="font-size:7px">复核</text>
<text class="cn" x="719" y="720" textLength="16" lengthAdjust="spacing" style="font-size:7px">审定</text>
<text class="cn" x="765" y="720" textLength="22" lengthAdjust="spacing" style="font-size:7px">第1张</text>
<text class="cn" x="817" y="720" textLength="18" lengthAdjust="spacing" style="font-size:7px">图号</text>
<text class="cn" x="765" y="737" textLength="22" lengthAdjust="spacing" style="font-size:7px">共1张</text>
<text class="cn" x="810" y="737" textLength="37" lengthAdjust="spacing" style="font-size:7px">SY-QT-10</text>
</svg>
</body></html>
